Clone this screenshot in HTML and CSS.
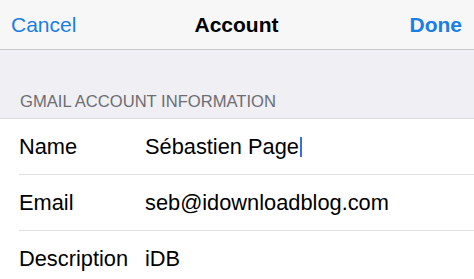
FILE: index.html
```html
<!DOCTYPE html>
<html lang="en">
<head>
    <meta charset="UTF-8">
    <meta name="viewport" content="width=device-width, initial-scale=1.0">
    <title>Account</title>
    <link rel="stylesheet" href="styles.css">
</head>
<body>
    <div class="navbar">
        <span class="nav-btn">Cancel</span>
        <span class="nav-title">Account</span>
        <span class="nav-btn done">Done</span>
    </div>
    <div class="group-header">GMAIL ACCOUNT INFORMATION</div>
    <div class="table">
        <div class="row">
            <span class="label">Name</span>
            <span class="value">Sébastien Page<span class="cursor"></span></span>
        </div>
        <div class="row">
            <span class="label">Email</span>
            <span class="value">seb@idownloadblog.com</span>
        </div>
        <div class="row last">
            <span class="label">Description</span>
            <span class="value">iDB</span>
        </div>
    </div>
</body>
</html>
```
FILE: styles.css
```css
body {
    margin: 0;
    font-family: 'Liberation Sans', Arial, sans-serif;
    background-color: #efeff4;
    color: #000;
    width: 474px;
    height: 279px;
    overflow: hidden;
}
.navbar {
    height: 49px;
    background-color: #f7f7f8;
    border-bottom: 1px solid #c8c7cc;
    display: flex;
    align-items: center;
    justify-content: space-between;
    padding: 0 12px 0 11px;
    font-size: 21px;
    box-sizing: content-box;
}
.nav-btn {
    color: #1a7ee6;
    width: 80px;
}
.nav-btn.done {
    font-weight: 700;
    text-align: right;
}
.nav-title {
    font-weight: 700;
}
.group-header {
    height: 69px;
    box-sizing: border-box;
    padding: 42px 0 0 20px;
    color: #6d6d72;
    font-size: 16.6px;
    border-bottom: 1px solid #d9d9de;
}
.table {
    background-color: #fff;
}
.row {
    display: flex;
    align-items: center;
    height: 55px;
    margin-left: 19px;
    border-bottom: 1px solid #e0e0e3;
    font-size: 21.8px;
}
.row.last {
    border-bottom: none;
}
.label {
    width: 126px;
    flex-shrink: 0;
}
.value {
    display: flex;
    align-items: center;
}
.cursor {
    display: inline-block;
    width: 2px;
    height: 20px;
    margin-left: 1px;
    background-color: #3b6fd8;
}
```
